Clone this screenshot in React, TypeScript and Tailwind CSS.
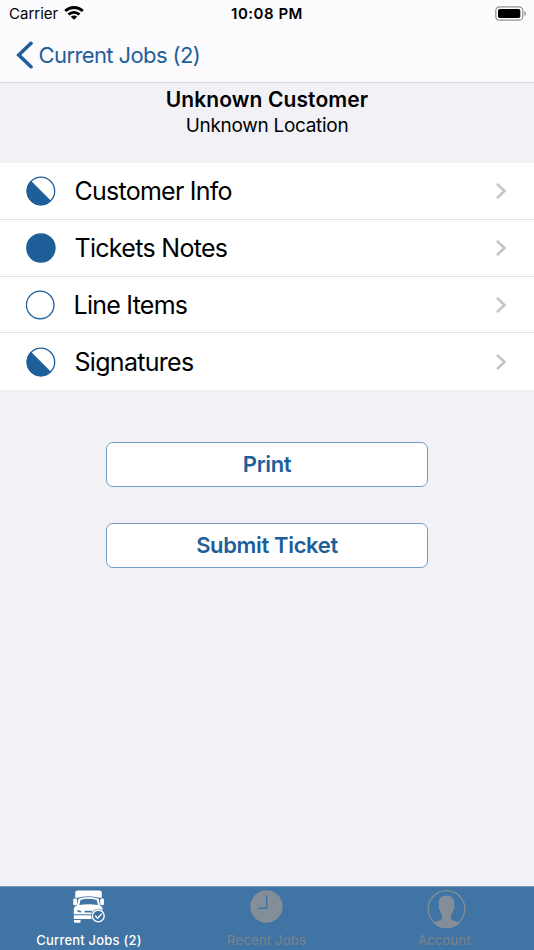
import React from "react";

type Status = "empty" | "half" | "full";

interface Section {
  title: string;
  status: Status;
  labelClass: string;
}

const sections: Section[] = [
  { title: "Customer Info", status: "half", labelClass: "ml-[18.5px] tracking-[-0.75px]" },
  { title: "Tickets Notes", status: "full", labelClass: "ml-[18.5px] tracking-[-0.7px]" },
  { title: "Line Items", status: "empty", labelClass: "ml-[17.5px] tracking-[-0.75px]" },
  { title: "Signatures", status: "half", labelClass: "ml-[18.5px] tracking-[-0.7px]" },
];

function StatusBar() {
  return (
    <div className="flex h-7 items-center justify-between pl-[9px] pr-[7px] text-[15px] leading-7 text-black">
      <div className="flex w-[120px] items-center">
        <span>Carrier</span>
        <svg className="mb-[2px] ml-[6px]" width="20" height="15" viewBox="0 0 20 15" fill="none" stroke="#000" strokeWidth="2.9">
          <path d="M1.2 5C6.2.3 13.8.3 18.8 5" />
          <path d="M4.5 8.5C7.7 5.6 12.3 5.6 15.5 8.5" />
          <path d="M10 13.8 6.8 10.7c1.9-1.6 4.5-1.6 6.4 0Z" fill="#000" stroke="none" />
        </svg>
      </div>
      <span className="pr-[2px] font-semibold tracking-[0.5px]">10:08 PM</span>
      <div className="flex w-[120px] justify-end pb-[2px]">
        <svg width="32" height="15" viewBox="0 0 32 15">
          <rect x="0.8" y="0.8" width="27" height="13.4" rx="3.8" fill="none" stroke="#929294" strokeWidth="1.2" />
          <rect x="3" y="3" width="22.3" height="9" rx="1.8" fill="#000" />
          <path d="M29.4 5v5c2-.8 2-4.2 0-5Z" fill="#929294" />
        </svg>
      </div>
    </div>
  );
}

function StatusDot({ status }: { status: Status }) {
  return (
    <svg width="30" height="30" viewBox="0 0 30 30">
      <circle
        cx={status === "empty" ? 14.2 : 14.9}
        cy="15"
        r="13.8"
        fill={status === "full" ? "#1f5f99" : "#fff"}
        stroke="#1f5f99"
        strokeWidth={status === "full" ? 2 : 1.3}
      />
      {status === "half" && <path d="M5 5.2A13.9 13.9 0 0 0 24.7 24.9Z" fill="#1f5f99" stroke="#1f5f99" strokeWidth="0.8" />}
    </svg>
  );
}

function TruckIcon() {
  return (
    <svg width="32" height="34" viewBox="0 0 32 34" fill="#fff">
      {/* trailer and mirrors */}
      <path d="M4.5.5h22q2.3 0 2.3 2v5.3h-2.3Q15.5 4.600 4.500 7.800H2.200V2.500q0-2 2.300-2Z" />
      <rect x="0.2" y="8.6" width="3.8" height="6.6" rx="1.2" />
      <rect x="27.2" y="8.6" width="3.8" height="6.6" rx="1.2" />
      {/* cab */}
      <path
        fillRule="evenodd"
        d="M5.500 8.700Q15.500 5.400 25.700 8.700L27 15.800q2.700.9 2.700 3.300V24.300H.8v-5.200q0-2.400 3-3.300ZM7.500 10 6.300 15Q15.500 13.400 25 15L23.700 10Q15.500 7.700 7.500 10ZM4.500 20v1.900l3.700.5v-1.400ZM11.500 20.700v1.800h7.500v-1.800Z"
      />
      <path d="M.8 25.200h20V29H.8ZM1 30h6.500v1.900q0 .8-.8.8H1.800q-.8 0-.8-.8Z" />
      <circle cx="25.3" cy="25.900" r="7.200" fill="#3f74a4" />
      <circle cx="25.3" cy="25.900" r="5.900" fill="#3f74a4" stroke="#fff" strokeWidth="1.300" />
      <path d="m22.2 25.800 2.400 2.500 4.200-4.700" fill="none" stroke="#fff" strokeWidth="1.400" />
    </svg>
  );
}

function ClockIcon() {
  return (
    <svg width="33" height="33" viewBox="0 0 33 33">
      <circle cx="16.5" cy="16.5" r="16.2" fill="#848e98" />
      <path d="M16.7 5.5v12.700H8" fill="none" stroke="#3f74a4" strokeWidth="1.5" />
    </svg>
  );
}

function AccountIcon() {
  return (
    <svg className="ml-[3px]" width="39" height="38" viewBox="0 0 39 38">
      <circle cx="19.5" cy="19" r="18.3" fill="none" stroke="#848e98" strokeWidth="1.3" />
      <path
        d="M19.5 5.500c-5.200 0-8 3-7.800 7.500l.2 2.500c-.9.2-.5 3.300.8 4.300.5 2.300 1.200 3.700 2.300 5v3.700c-1 2.500-5.500 2.500-8.500 4.500A18.300 18.300 0 0 0 32.500 33c-3-2-7.500-2-8.500-4.500v-3.700c1.100-1.300 1.800-2.700 2.300-5 1.300-1 1.700-4.100.8-4.300l.2-2.500c.2-4.500-2.600-7.500-7.800-7.500Z"
        fill="#848e98"
      />
    </svg>
  );
}

export default function App() {
  return (
    <div className="flex h-[950px] w-[534px] flex-col overflow-hidden bg-[#f2f1f6] font-['Inter','Liberation_Sans',sans-serif] text-black">
      <header className="h-[83px] border-b border-[#d9d9dc] bg-[#fcfbfd]">
        <StatusBar />
        <button type="button" className="flex h-[54px] items-center pl-4 text-[22px] text-[#1f5f99]">
          <svg width="18" height="28" viewBox="0 0 18 28" fill="none" stroke="#1f5f99" strokeWidth="3.6" strokeLinecap="round">
            <path d="M15 2.3 2.8 14 15 25.7" />
          </svg>
          <span className="ml-[4.5px] tracking-[-0.6px]">Current Jobs (2)</span>
        </button>
      </header>

      <div className="h-20 pt-[3px] text-center">
        <h1 className="text-[21px] leading-[27px] font-semibold tracking-[0.1px]">Unknown Customer</h1>
        <p className="text-[19px] leading-[25px] tracking-[-0.3px]">Unknown Location</p>
      </div>

      <ul className="grid h-[227px] grid-rows-[57px_57px_56px_57px] bg-white">
        {sections.map((section) => (
          <li key={section.title} className="flex items-center border-b border-[#e3e3e5] pr-[27px] pl-[26px] last:border-b-0">
            <StatusDot status={section.status} />
            <span className={`flex-1 text-[25px] leading-8 ${section.labelClass}`}>{section.title}</span>
            <svg width="12" height="18" viewBox="0 0 12 18" fill="none" stroke="#c3c3c5" strokeWidth="2.5">
              <path d="m2 1.8 7.5 7.2L2 16.2" />
            </svg>
          </li>
        ))}
      </ul>

      <div className="flex flex-1 flex-col items-center gap-9 pt-[51.5px] text-[22px] font-semibold tracking-[-0.35px] text-[#1f5f99]">
        <button type="button" className="h-[45px] w-[322px] rounded-[7px] border border-[#709dc4] bg-white">
          Print
        </button>
        <button type="button" className="h-[45px] w-[322px] rounded-[7px] border border-[#709dc4] bg-white">
          Submit Ticket
        </button>
      </div>

      <nav className="grid h-16 grid-cols-3 border-t border-[#7795b0] bg-[#3f74a4] text-[13px] leading-4 font-medium tracking-[0.2px] text-[#74818d]">
        <div className="flex flex-col items-center pt-[3px] text-white">
          <TruckIcon />
          <span className="mt-[8px]">Current Jobs (2)</span>
        </div>
        <div className="flex flex-col items-center pt-[3px] pr-px">
          <ClockIcon />
          <span className="mt-[9px]">Recent Jobs</span>
        </div>
        <div className="flex flex-col items-center pt-[3px] pr-px">
          <AccountIcon />
          <span className="mt-[4px]">Account</span>
        </div>
      </nav>
    </div>
  );
}
